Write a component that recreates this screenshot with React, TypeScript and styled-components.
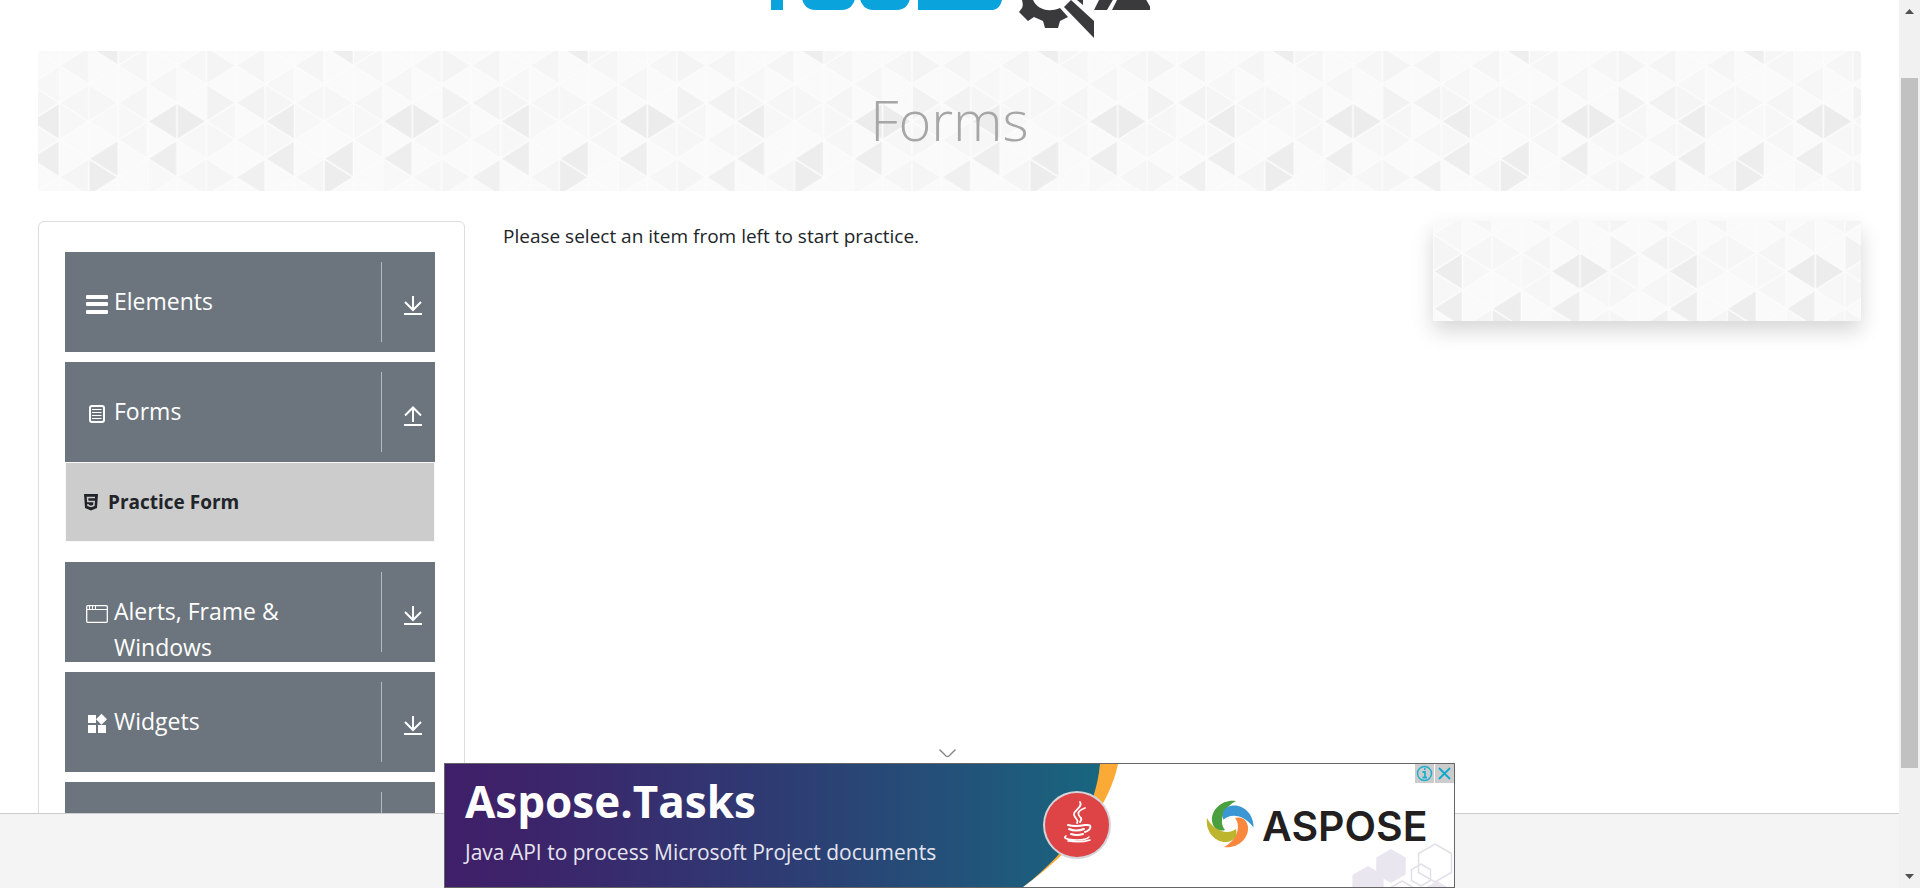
import React, { useId } from "react";
import styled, { createGlobalStyle } from "styled-components";

const UI = `"Open Sans", "Noto Sans", sans-serif`;

const GlobalStyle = createGlobalStyle`
  *, *::before, *::after { box-sizing: border-box; }
  body { margin: 0; background: #fff; color: #212529; font-family: ${UI}; }
  button { font: inherit; border: 0; cursor: pointer; }
`;

const Shell = styled.div`
  height: 100vh;
  display: grid;
  grid-template-columns: minmax(0, 1fr) 21px;
  overflow: hidden;
`;

const Page = styled.div`
  display: grid;
  grid-template-rows: minmax(0, 1fr) 75px;
  min-height: 0;
`;

const Body = styled.div`
  overflow: hidden;
  padding: 0 38px;
`;

const Header = styled.header`
  height: 51px;
  display: flex;
  justify-content: center;
`;

const Banner = styled.div`
  position: relative;
  height: 140px;
  display: flex;
  align-items: center;
  justify-content: center;
  padding-bottom: 4px;
  margin-bottom: 30px;
`;

const Title = styled.h1`
  position: relative;
  margin: 0;
  font-size: 56px;
  line-height: 72px;
  font-weight: 300;
  color: #a6a6a6;
`;

const PatternSvg = styled.svg`
  position: absolute;
  inset: 0;
  width: 100%;
  height: 100%;
`;

const Columns = styled.div`
  display: grid;
  grid-template-columns: 427px minmax(0, 1fr) 428px;
  column-gap: 38px;
  align-items: start;
`;

const Sidebar = styled.nav`
  border: 1px solid #ddd;
  border-radius: 6px;
  padding: 30px 29px 30px 26px;
`;

const GroupButton = styled.button`
  display: grid;
  grid-template-columns: 49px minmax(0, 1fr) 54px;
  grid-template-rows: 100px;
  width: 100%;
  height: 100px;
  padding: 0;
  overflow: hidden;
  margin-bottom: ${(p: { $open?: boolean }) => (p.$open ? "0" : "10px")};
  background: #6c757d;
  color: #fff;
  text-align: left;
`;

const GroupIcon = styled.span`
  padding: 41px 0 0 21px;
  line-height: 0;
`;

const GroupLabel = styled.span`
  align-self: start;
  padding: 31px 24px 0 0;
  font-size: 23px;
  line-height: 36px;
`;

const GroupArrow = styled.span`
  grid-column: 3;
  height: 80px;
  align-self: center;
  padding: 33px 0 0 21px;
  border-left: 1px solid #b5babe;
  line-height: 0;
`;

const SubList = styled.ul`
  list-style: none;
  margin: 0 0 20px;
  padding: 0;
  border: 1px solid #f8f8f8;
  background: #ccc;
`;

const SubLink = styled.a`
  display: flex;
  align-items: center;
  gap: 10px;
  height: 78px;
  padding-left: 18px;
  color: #212529;
  font-size: 19px;
  line-height: 30px;
  font-weight: 700;
  text-decoration: none;
`;

const Message = styled.p`
  margin: 0;
  font-size: 19px;
  line-height: 30px;
`;

const SideBox = styled.aside`
  position: relative;
  height: 100px;
  box-shadow: 0 10px 20px rgba(0, 0, 0, 0.16);
`;

const Footer = styled.footer`
  background: #f4f4f4;
  border-top: 1px solid #ccc;
`;

const ScrollTrack = styled.div`
  display: flex;
  flex-direction: column;
  align-items: center;
  justify-content: space-between;
  padding: 9px 0;
  background: #f1f1f1;
`;

const ScrollLane = styled.div`
  flex: 1;
  display: flex;
  flex-direction: column;
  width: 17px;
  &::before { content: ""; flex: 64; }
  &::after { content: ""; flex: 106; }
`;

const ScrollThumb = styled.div`
  flex: 690;
  background: #c1c1c1;
`;

const AdDock = styled.div`
  position: fixed;
  bottom: 0;
  left: 0;
  right: 21px;
  display: flex;
  justify-content: center;
`;

const Ad = styled.section`
  position: relative;
  width: 1011px;
  height: 125px;
`;

const AdLink = styled.a`
  display: block;
  height: 125px;
  color: #fff;
  text-decoration: none;
  border: 1px solid #666;
  background: #fff;
  overflow: hidden;
`;

const AdArt = styled.svg`
  position: absolute;
  inset: 0;
`;

const AdFrame = styled.rect`
  fill: none;
  stroke: #666;
`;

const AdCopy = styled.div`
  position: relative;
  padding: 7px 0 0 20px;
`;

const AdTitle = styled.div`
  font-size: 44px;
  line-height: 60px;
  font-weight: 700;
`;

const AdText = styled.div`
  font-size: 21px;
  line-height: 42px;
  color: #e6e4ef;
`;

const AdBrand = styled.div`
  position: absolute;
  top: 39px;
  left: 818px;
  color: #231f20;
  font-family: Inter, ${UI};
  font-size: 41px;
  line-height: 48px;
  font-weight: 600;
`;

const AdTools = styled.div`
  position: absolute;
  top: 1px;
  right: 1px;
  display: flex;
  gap: 1px;
`;

const AdTool = styled.button`
  width: 19px;
  height: 19px;
  padding: 0;
  background: #ccc;
  line-height: 0;
`;

const Collapse = styled.button`
  position: absolute;
  top: -18px;
  left: 491px;
  padding: 2px;
  background: none;
  line-height: 0;
`;

/* Triangle grid: [column, apex row in half-cells, direction, tone] */
const CW = 29.4;
const CH = 18.6;
type Tri = [number, number, "l" | "r", string];
const tris: Tri[] = [
  [2, 0, "l", "#f8f8f8"], [0, 4, "l", "#ededed"], [0, 6, "l", "#eee"],
  [4, 4, "l", "#ececec"], [5, 4, "r", "#ececec"], [2, 6, "l", "#ededed"],
  [2, 7, "r", "#ededed"], [4, 6, "l", "#eee"], [6, 3, "r", "#f2f2f2"],
  [7, 3, "l", "#f2f2f2"], [7, 7, "l", "#f0f0f0"], [6, 1, "r", "#f4f4f4"],
  [7, 1, "l", "#f5f5f5"], [1, 1, "l", "#f5f5f5"], [1, 3, "l", "#f6f6f6"],
  [3, 1, "l", "#f6f6f6"], [3, 3, "l", "#f5f5f5"], [3, 5, "l", "#f6f6f6"],
  [0, 2, "l", "#f7f7f7"], [4, 2, "l", "#f6f6f6"], [5, 1, "l", "#f6f6f6"],
  [5, 5, "l", "#f7f7f7"], [5, 7, "l", "#f6f6f6"], [7, 5, "l", "#f6f6f6"],
  [6, 4, "l", "#f6f6f6"], [2, 3, "r", "#f6f6f6"], [0, 3, "r", "#f5f5f5"],
  [0, 5, "r", "#f7f7f7"], [4, 7, "r", "#f8f8f8"], [1, 4, "r", "#f7f7f7"],
  [1, 7, "l", "#f5f5f5"], [3, 4, "r", "#f7f7f7"], [6, 5, "r", "#f6f6f6"],
  [2, 4, "l", "#f8f8f8"], [6, 7, "r", "#f5f5f5"], [3, 0, "r", "#f6f6f6"],
];

function triPoints(c: number, r: number, d: "l" | "r") {
  const y = r * CH;
  const a = d === "l" ? c : c + 1;
  const b = d === "l" ? c + 1 : c;
  return `${a * CW},${y} ${b * CW},${y - CH} ${b * CW},${y + CH}`;
}

function Pattern() {
  const id = useId();
  return (
    <PatternSvg aria-hidden="true">
      <defs>
        <pattern id={id} x={-919.5} y={-74} width={CW * 8} height={CH * 8} patternUnits="userSpaceOnUse">
          <rect width={CW * 8} height={CH * 8} fill="#fafafa" />
          {tris.map(([c, r, d, tone], i) => (
            <polygon key={i} points={triPoints(c, r, d)} fill={tone} />
          ))}
          <polygon points={`${2 * CW},0 ${3 * CW},0 ${3 * CW},${CH}`} fill="#eee" />
          <g stroke="#fcfcfc" strokeWidth="1.6">
            {[0, 1, 2, 3, 4, 5, 6, 7, 8].map((c) => (
              <line key={c} x1={c * CW} x2={c * CW} y1={0} y2={CH * 8} />
            ))}
            {[-8, -6, -4, -2, 0, 2, 4, 6, 8].map((r) => (
              <g key={r}>
                <line x1={0} y1={r * CH} x2={CW * 8} y2={(r + 8) * CH} />
                <line x1={0} y1={(r + 8) * CH} x2={CW * 8} y2={r * CH} />
              </g>
            ))}
          </g>
        </pattern>
      </defs>
      <svg x="50%" y="50%" overflow="visible">
        <rect x="-2000" y="-70" width="4000" height="140" fill={`url(#${id})`} />
      </svg>
    </PatternSvg>
  );
}

const Logo = () => (
  <svg width="400" height="40" viewBox="750 0 400 40" role="img" aria-label="Tools QA">
    <g fill="#0ba3dc">
      <rect x="771" y="-10" width="12" height="20" />
      <rect x="802" y="-30" width="53" height="40" rx="13" />
      <rect x="860" y="-30" width="50" height="40" rx="13" />
      <path d="M918-10H1003Q1003 9 993 10H918Z" />
    </g>
    <g fill="#3a3a3c">
      <path d="M1022 0C1023 4 1023 6 1022 8L1019 12 1028 21 1034 17C1037 18 1040 20 1043 21L1045 28H1058L1060 21 1068 17 1060 8C1048 13 1037 9 1033 0Z" />
      <path d="M1064 7L1071 0 1094 21V38Z" />
      <path d="M1077 0H1083V5Z" />
      <path d="M1100-2H1114L1107 10H1094ZM1119-4H1144L1152 10H1112Z" />
    </g>
  </svg>
);

const BarsIcon = () => (
  <svg width="22" height="22" viewBox="0 0 22 22" fill="#fff">
    <rect y="2" width="22" height="4" rx="1" />
    <rect y="9" width="22" height="4" rx="1" />
    <rect y="17" width="22" height="4" rx="1" />
  </svg>
);

const FormIcon = () => (
  <svg width="22" height="22" viewBox="0 0 22 22" fill="none" stroke="#fff">
    <rect x="4" y="3" width="14" height="16" rx="2" strokeWidth="2" />
    <path d="M6 6.5H15.500M6 9.500H15.500M6 12.500H15.500M6 15.500H15.500" />
  </svg>
);

const WindowIcon = () => (
  <svg width="22" height="22" viewBox="0 0 22 22" fill="none" stroke="#fff">
    <rect x=".7" y="2.700" width="20.600" height="16.600" rx="1" strokeWidth="1.300" />
    <path d="M1 6.500H21M3.500 3V6M6.500 3V6M9.500 3V6" />
  </svg>
);

const WidgetsIcon = () => (
  <svg width="22" height="22" viewBox="0 0 22 22" fill="#fff">
    <path d="M2 2H10V10H2ZM2 12H10V20H2ZM12 12H20V20H12ZM15.500 .8L21 6.300 15.500 11.800 10 6.300Z" />
  </svg>
);

const Html5Icon = () => (
  <svg width="14" height="17" viewBox="0 0 14 17">
    <path d="M0 0H14L13 14 7 16.500 1 14Z" fill="#212529" />
    <path d="M11 3.500H3.500L3.800 7.500H10.200L9.900 11.500 7 12.500 4 11.500V10" fill="none" stroke="#ccc" strokeWidth="1.500" />
  </svg>
);

const ArrowIcon = ({ up }: { up?: boolean }) => (
  <svg width="20" height="22" viewBox="0 0 20 22" fill="none" stroke="#fff" strokeWidth="2">
    <path d={up ? "M10 17V3M2 10.500L10 2.500 18 10.500" : "M10 1V15M2 7L10 15 18 7"} />
    <path d={up ? "M1 20H19" : "M1 19H19"} />
  </svg>
);

type Group = { name: string; label?: string; icon?: React.ReactNode; items?: string[] };

const groups: Group[] = [
  { name: "elements", label: "Elements", icon: <BarsIcon /> },
  { name: "forms", label: "Forms", icon: <FormIcon />, items: ["Practice Form"] },
  { name: "alerts", label: "Alerts, Frame & Windows", icon: <WindowIcon /> },
  { name: "widgets", label: "Widgets", icon: <WidgetsIcon /> },
  { name: "more" },
];

const hex = (x: number, y: number, r: number) =>
  [-90, -30, 30, 90, 150, 210]
    .map((a) => `${x + r * Math.cos((a * Math.PI) / 180)},${y + r * Math.sin((a * Math.PI) / 180)}`)
    .join(" ");

const swirls: [number, string][] = [
  [0, "#4a9f3f"],
  [84, "#3a97d3"],
  [180, "#f9873e"],
  [270, "#bdb52e"],
];

const AdDrawing = () => (
  <AdArt width="1011" height="125" viewBox="0 0 1011 125" aria-hidden="true">
    <defs>
      <linearGradient id="adSky" x1="0" x2="1">
        <stop offset="0" stopColor="#3f1f69" />
        <stop offset=".12" stopColor="#3d236a" />
        <stop offset=".5" stopColor="#2e3b73" />
        <stop offset=".8" stopColor="#225379" />
        <stop offset="1" stopColor="#18667f" />
      </linearGradient>
    </defs>
    <path d="M640 1H674C667 36 640 80 579 124Z" fill="#fbab35" />
    <path d="M1 1H656C652 44 630 85 579 124H1Z" fill="url(#adSky)" />
    <circle cx="633" cy="62" r="34" fill="#d4d4da" />
    <circle cx="633" cy="62" r="32" fill="#de4345" />
    <g fill="none" stroke="#fff" strokeLinecap="round">
      <path d="M636 39C640 45 626 48 631 54 634 58 634 58 633 60M641 45C633 48 633 51 637 55 638 57 637 58 636 59" strokeWidth="1.800" />
      <path d="M624 62Q631 64 641 62M625 66Q632 69 640 66M627 71Q633 73 639 71M642 62C649 61 647 67 641 69" strokeWidth="2" />
      <path d="M622 73C615 77 640 79 645 74M624 78Q637 80 646 77" strokeWidth="1.600" />
    </g>
    <g transform="translate(786 61)">
      {swirls.map(([angle, color]) => (
        <path
          key={angle}
          transform={`rotate(${angle})`}
          fill={color}
          d="M6-23C-7-25-19-15-18-3C-17 4-12 8-5 6C-12-3-6-17 6-23Z"
        />
      ))}
    </g>
    <g fill="#e9e6f0">
      <polygon points={hex(947, 103, 17)} />
      <polygon points={hex(924, 121, 18)} />
      <polygon points={hex(993, 134, 16)} />
    </g>
    <g fill="none" stroke="#e2dfe9" strokeWidth="1.500">
      <polygon points={hex(991, 100, 19)} />
      <polygon points={hex(977, 112, 11)} />
      <polygon points={hex(958, 132, 14)} />
    </g>
    <AdFrame x=".5" y=".5" width="1010" height="124" />
  </AdArt>
);

export default function App() {
  return (
    <>
      <GlobalStyle />
      <Shell>
        <Page>
          <Body>
            <Header><Logo /></Header>
            <Banner>
              <Pattern />
              <Title>Forms</Title>
            </Banner>
            <Columns>
              <Sidebar>
                {groups.map((g) => (
                  <React.Fragment key={g.name}>
                    <GroupButton type="button" $open={!!g.items} aria-label={g.label ?? g.name} aria-expanded={!!g.items}>
                      <GroupIcon>{g.icon}</GroupIcon>
                      {g.label && <GroupLabel>{g.label}</GroupLabel>}
                      <GroupArrow><ArrowIcon up={!!g.items} /></GroupArrow>
                    </GroupButton>
                    {g.items && (
                      <SubList>
                        {g.items.map((item) => (
                          <li key={item}>
                            <SubLink href="#practice-form"><Html5Icon />{item}</SubLink>
                          </li>
                        ))}
                      </SubList>
                    )}
                  </React.Fragment>
                ))}
              </Sidebar>
              <Message>Please select an item from left to start practice.</Message>
              <SideBox><Pattern /></SideBox>
            </Columns>
          </Body>
          <Footer />
        </Page>
        <ScrollTrack aria-hidden="true">
          <svg width="9" height="5" viewBox="0 0 9 5"><path d="M4.500 0L9 5H0Z" fill="#505050" /></svg>
          <ScrollLane><ScrollThumb /></ScrollLane>
          <svg width="9" height="5" viewBox="0 0 9 5"><path d="M0 0H9L4.500 5Z" fill="#505050" /></svg>
        </ScrollTrack>
      </Shell>
      <AdDock>
        <Ad>
          <Collapse type="button" aria-label="Collapse">
            <svg width="20" height="14" viewBox="0 0 20 14" fill="none" stroke="#888" strokeWidth="1.500">
              <path d="M2.500 2.500L9 9Q10.500 10 12 9L18.500 2.500" />
            </svg>
          </Collapse>
          <AdLink href="#aspose">
            <AdDrawing />
            <AdCopy>
              <AdTitle>Aspose.Tasks</AdTitle>
              <AdText>Java API to process Microsoft Project documents</AdText>
            </AdCopy>
            <AdBrand>ASPOSE</AdBrand>
          </AdLink>
          <AdTools>
            <AdTool type="button" aria-label="Ad information">
              <svg width="19" height="19" viewBox="0 0 19 19" fill="none" stroke="#1fb0d0">
                <circle cx="9.500" cy="9.500" r="7" strokeWidth="1.500" />
                <path d="M7.500 8H10V13M7.500 13.500H12M9 5H10.500" strokeWidth="1.800" />
              </svg>
            </AdTool>
            <AdTool type="button" aria-label="Close ad">
              <svg width="19" height="19" viewBox="0 0 19 19" fill="none" stroke="#0fa9cf" strokeWidth="1.800">
                <path d="M4 4L15 15M15 4L4 15" />
              </svg>
            </AdTool>
          </AdTools>
        </Ad>
      </AdDock>
    </>
  );
}
